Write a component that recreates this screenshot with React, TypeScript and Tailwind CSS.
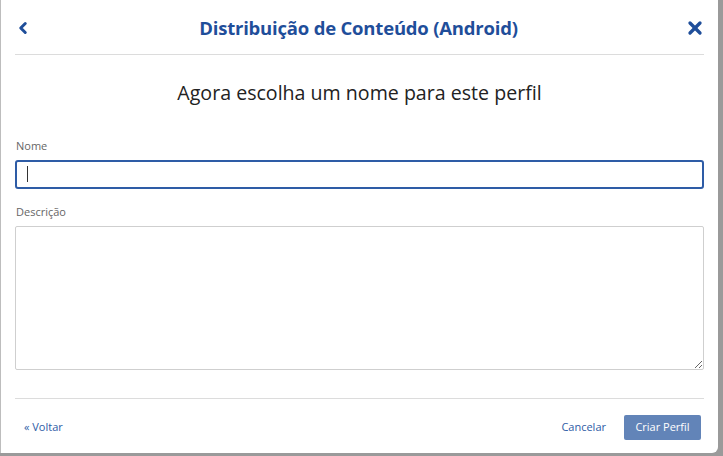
import { ChevronLeft, X } from 'lucide-react';

const App = () => {
  return (
    <div
      className="w-[723px] h-[456px] overflow-hidden bg-[#9a9a9a]"
      style={{ fontFamily: '"Open Sans", "Liberation Sans", sans-serif' }}
    >
      <div className="w-[718px] h-[453px] bg-white rounded-br-md border-l border-[#bdbdbd] flex flex-col px-[14px]">
        {/* header */}
        <div className="h-[55px] flex items-center justify-between border-b border-[#dcdcdc] pt-[1px]">
          <ChevronLeft className="w-[18px] h-[18px] text-[#1f4e9a] ml-[-1px]" strokeWidth={4} />
          <h2
            className="text-[18.5px] font-bold text-[#1f4e9a] tracking-[-0.2px]"
            style={{ fontFamily: '"Liberation Sans Narrow", "Open Sans", sans-serif' }}
          >
            Distribuição de Conteúdo (Android)
          </h2>
          <X className="w-[20px] h-[20px] text-[#1f4e9a] mr-[-1px]" strokeWidth={4} />
        </div>

        <h3 className="text-center text-[19.6px] text-[#222] mt-[23px] leading-[30px]">
          Agora escolha um nome para este perfil
        </h3>

        <label className="text-[11px] text-[#666] mt-[30px] ml-[1px]">Nome</label>
        <div className="mt-[5px] h-[29px] border-2 border-[#2e5ca6] rounded-[3px] flex items-center px-[10px]">
          <span className="w-[1px] h-[16px] bg-[#333]" />
        </div>

        <label className="text-[11px] text-[#666] mt-[15px] ml-[1px]">Descrição</label>
        <textarea className="mt-[6px] h-[144px] border border-[#cfcfcf] rounded-[2px] resize-y outline-none" />

        <div className="mt-[28px] border-t border-[#dcdcdc] flex items-center justify-between h-[55px] pt-[2px]">
          <span className="text-[11px] text-[#2e5ca6] ml-[9px]">« Voltar</span>
          <div className="flex items-center gap-[18px] mr-[3px]">
            <span className="text-[11px] text-[#2e5ca6]">Cancelar</span>
            <button className="h-[25px] w-[77px] bg-[#6284b8] text-white text-[11px] rounded-[2px]">
              Criar Perfil
            </button>
          </div>
        </div>
      </div>
    </div>
  );
};

export default App;
